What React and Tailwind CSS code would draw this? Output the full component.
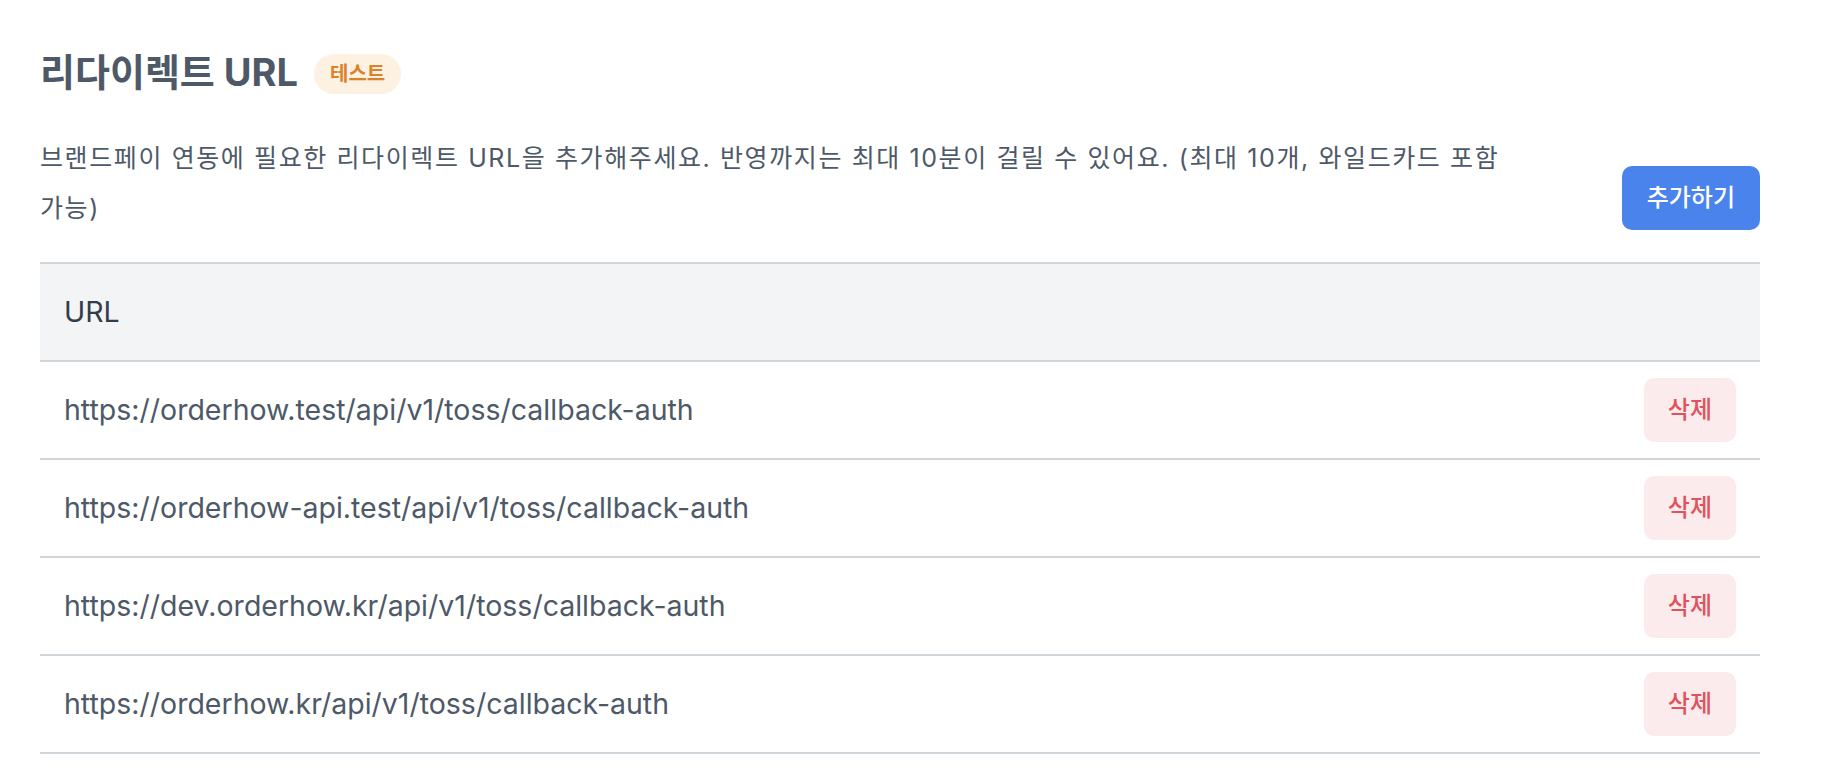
import React from "react";

const urls = [
  "https://orderhow.test/api/v1/toss/callback-auth",
  "https://orderhow-api.test/api/v1/toss/callback-auth",
  "https://dev.orderhow.kr/api/v1/toss/callback-auth",
  "https://orderhow.kr/api/v1/toss/callback-auth",
];

const App = () => {
  return (
    <div className="min-h-screen bg-white font-[Inter,'Noto_Sans_CJK_KR',sans-serif]">
      <div className="w-[1760px] pl-10 pt-12">
        {/* title */}
        <div className="flex h-12 items-center gap-4">
          <h1 className="text-[38px] font-bold leading-none text-[#4e5968]">
            리다이렉트 URL
          </h1>
          <span className="mt-1 flex h-10 items-center rounded-full bg-[#fdf1e1] px-4 text-[20px] font-bold text-[#d9822b]">
            테스트
          </span>
        </div>

        {/* description + add button */}
        <div className="mt-[37px] flex items-end justify-between">
          <p className="w-[1500px] break-keep text-[25px] leading-[50px] tracking-[1.6px] text-[#4e5968]">
            브랜드페이 연동에 필요한 리다이렉트 URL을 추가해주세요. 반영까지는 최대 10분이 걸릴 수 있어요.
            (최대 10개, 와일드카드 포함 가능)
          </p>
          <button className="mb-[3px] h-16 rounded-[10px] bg-[#4a83ec] px-[25px] text-[24px] font-medium text-white">
            추가하기
          </button>
        </div>

        {/* url table */}
        <div className="mt-[29px]">
          <div className="flex h-[100px] items-center border-y-2 border-[#d1d6db] bg-[#f2f4f6] px-6">
            <span className="text-[28.5px] text-[#333d4b]">URL</span>
          </div>
          {urls.map((url, index) => (
            <div
              key={index}
              className="flex h-[98px] items-center justify-between border-b-2 border-[#d1d6db] px-6"
            >
              <span className="text-[28.5px] text-[#4e5968]">{url}</span>
              <button className="h-16 rounded-[10px] bg-[#fcebec] px-6 text-[24px] font-medium text-[#e0525c]">
                삭제
              </button>
            </div>
          ))}
        </div>
      </div>
    </div>
  );
};

export default App;
